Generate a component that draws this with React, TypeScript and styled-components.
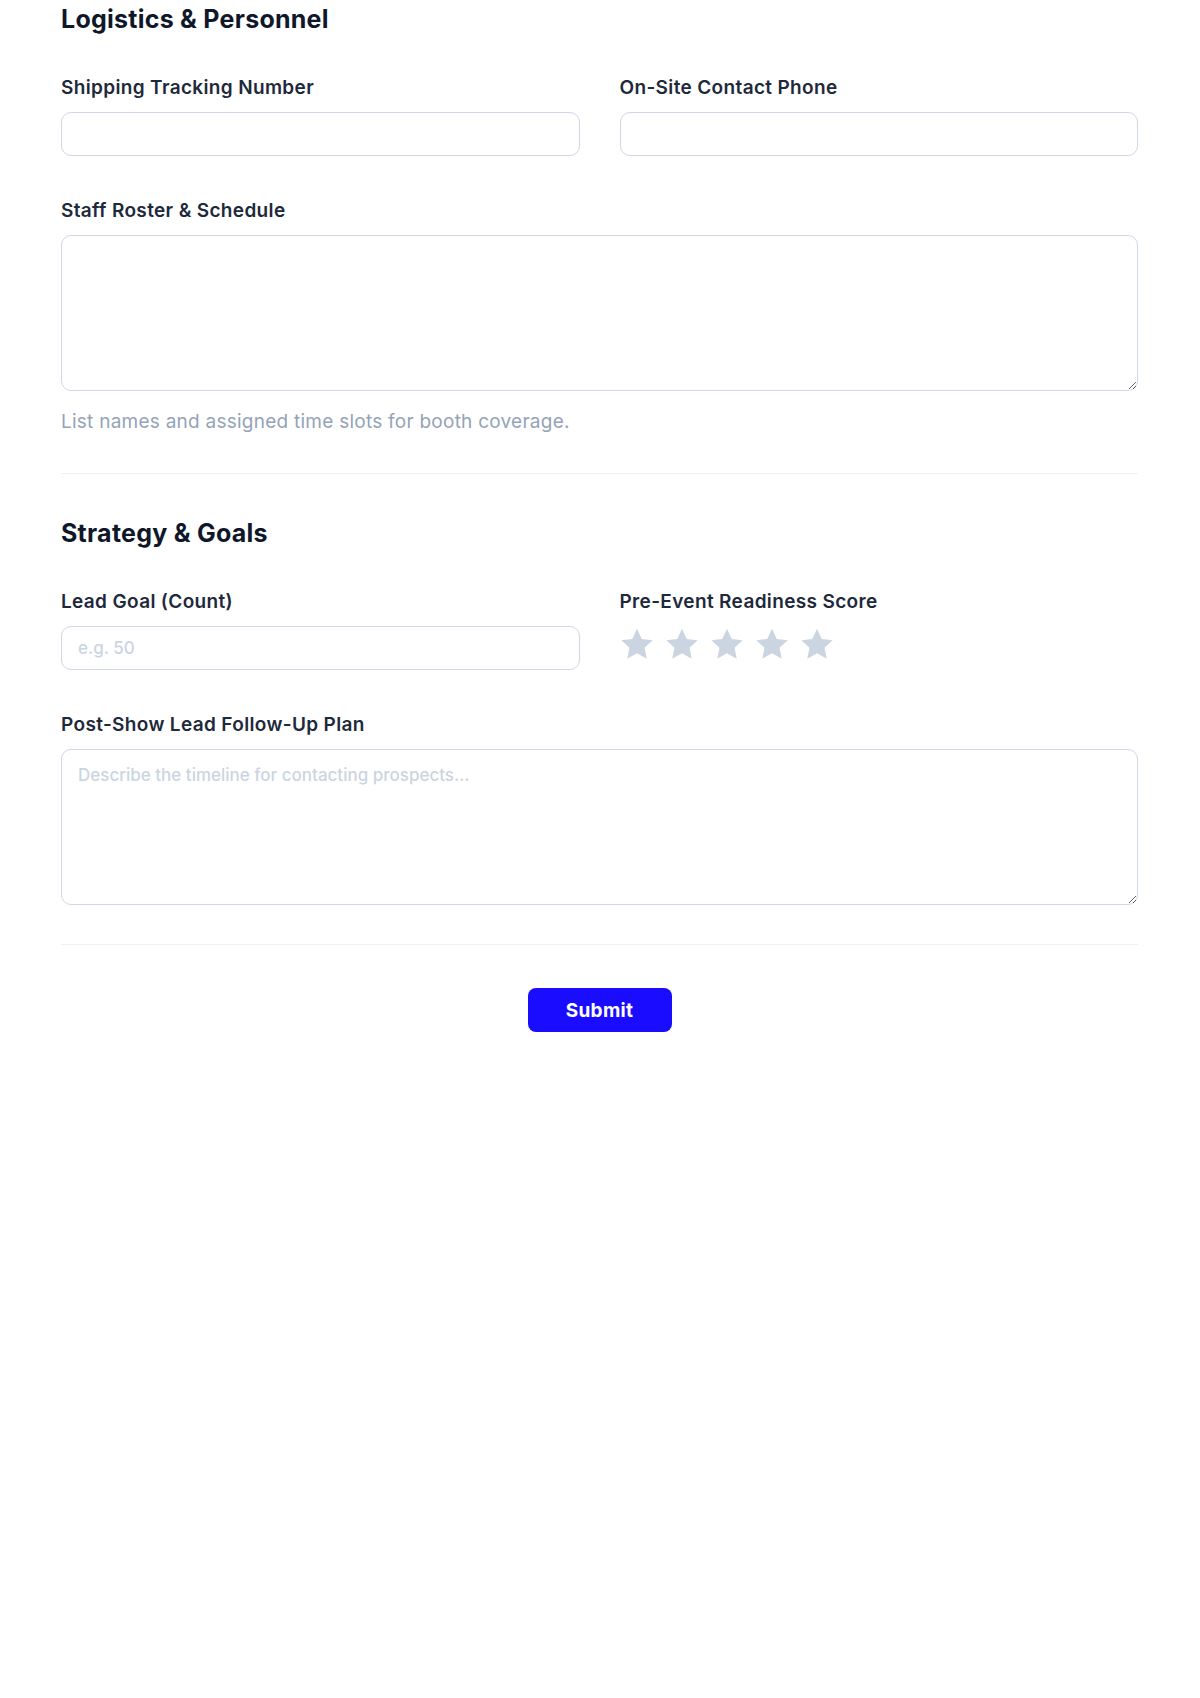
import React from "react";
import styled, { createGlobalStyle } from "styled-components";

const GlobalStyle = createGlobalStyle`
  * {
    box-sizing: border-box;
  }
  body {
    margin: 0;
    background: #ffffff;
    font-family: Inter, "Noto Sans", "Liberation Sans", sans-serif;
    color: #1e293b;
  }
`;

const Page = styled.form`
  max-width: 1200px;
  padding: 3px 62px 80px 61px;
`;

const Section = styled.section`
  display: flex;
  flex-direction: column;
`;

const SectionTitle = styled.h2`
  margin: 0 0 41px;
  font-size: 25px;
  line-height: 32px;
  font-weight: 700;
  color: #0f172a;
  letter-spacing: 0.25px;
`;

const Fields = styled.div`
  display: flex;
  flex-direction: column;
  gap: 43px;
`;

const Row = styled.div`
  display: grid;
  grid-template-columns: 1fr 1fr;
  column-gap: 40px;
`;

const Field = styled.div`
  display: flex;
  flex-direction: column;
  gap: 12px;
`;

const Label = styled.label`
  font-size: 19px;
  line-height: 24px;
  font-weight: 600;
  letter-spacing: 0.35px;
  color: #1e293b;
`;

const controlBase = `
  width: 100%;
  border: 1.5px solid #cfd8e4;
  border-radius: 10px;
  background: #ffffff;
  font-family: Inter, "Noto Sans", "Liberation Sans", sans-serif;
  font-size: 17px;
  line-height: 24px;
  color: #1e293b;
  outline: none;
  &::placeholder {
    color: #cbd5e1;
    font-weight: 500;
  }
`;

const TextInput = styled.input`
  ${controlBase}
  height: 44px;
  padding: 9px 16px;
`;

const TextArea = styled.textarea`
  ${controlBase}
  display: block;
  height: 156px;
  padding: 13px 16px;
  resize: vertical;
`;

const Help = styled.p`
  margin: 7px 0 0;
  font-size: 19px;
  line-height: 24px;
  letter-spacing: 0.25px;
  color: #94a3b8;
`;

const Divider = styled.hr`
  margin: 39px 0 43px;
  border: 0;
  border-top: 1px solid #eef2f6;
`;

const Stars = styled.div`
  display: flex;
  gap: 11px;
  margin-top: 2px;
`;

const StarButton = styled.button`
  padding: 0;
  border: 0;
  background: none;
  cursor: pointer;
  display: flex;
  color: #cbd5e1;
`;

const Actions = styled.div`
  display: flex;
  justify-content: center;
`;

const SubmitButton = styled.button`
  width: 144px;
  height: 44px;
  border: 0;
  border-radius: 8px;
  background: #1a0dff;
  color: #ffffff;
  font-family: Inter, "Noto Sans", "Liberation Sans", sans-serif;
  font-size: 19px;
  font-weight: 700;
  letter-spacing: 0.3px;
  cursor: pointer;
`;

const Star = () => (
  <svg width="34" height="32" viewBox="0 0 24 23" fill="currentColor">
    <path d="M12 0.6l3.4 7.3 7.9 0.9-5.9 5.4 1.6 7.9L12 18.1l-7 4 1.6-7.9-5.9-5.4 7.9-0.9z" />
  </svg>
);

export default function App() {
  return (
    <>
      <GlobalStyle />
      <Page onSubmit={e => e.preventDefault()}>
        <Section>
          <SectionTitle>Logistics &amp; Personnel</SectionTitle>
          <Fields>
            <Row>
              <Field>
                <Label>Shipping Tracking Number</Label>
                <TextInput type="text" />
              </Field>
              <Field>
                <Label>On-Site Contact Phone</Label>
                <TextInput type="tel" />
              </Field>
            </Row>
            <Field>
              <Label>Staff Roster &amp; Schedule</Label>
              <TextArea />
              <Help>List names and assigned time slots for booth coverage.</Help>
            </Field>
          </Fields>
        </Section>

        <Divider />

        <Section>
          <SectionTitle>Strategy &amp; Goals</SectionTitle>
          <Fields>
            <Row>
              <Field>
                <Label>Lead Goal (Count)</Label>
                <TextInput type="number" placeholder="e.g. 50" />
              </Field>
              <Field>
                <Label>Pre-Event Readiness Score</Label>
                <Stars>
                  {[1, 2, 3, 4, 5].map(n => (
                    <StarButton key={n} type="button" aria-label={`${n} star`}>
                      <Star />
                    </StarButton>
                  ))}
                </Stars>
              </Field>
            </Row>
            <Field>
              <Label>Post-Show Lead Follow-Up Plan</Label>
              <TextArea placeholder="Describe the timeline for contacting prospects..." />
            </Field>
          </Fields>
        </Section>

        <Divider />

        <Actions>
          <SubmitButton type="submit">Submit</SubmitButton>
        </Actions>
      </Page>
    </>
  );
}
